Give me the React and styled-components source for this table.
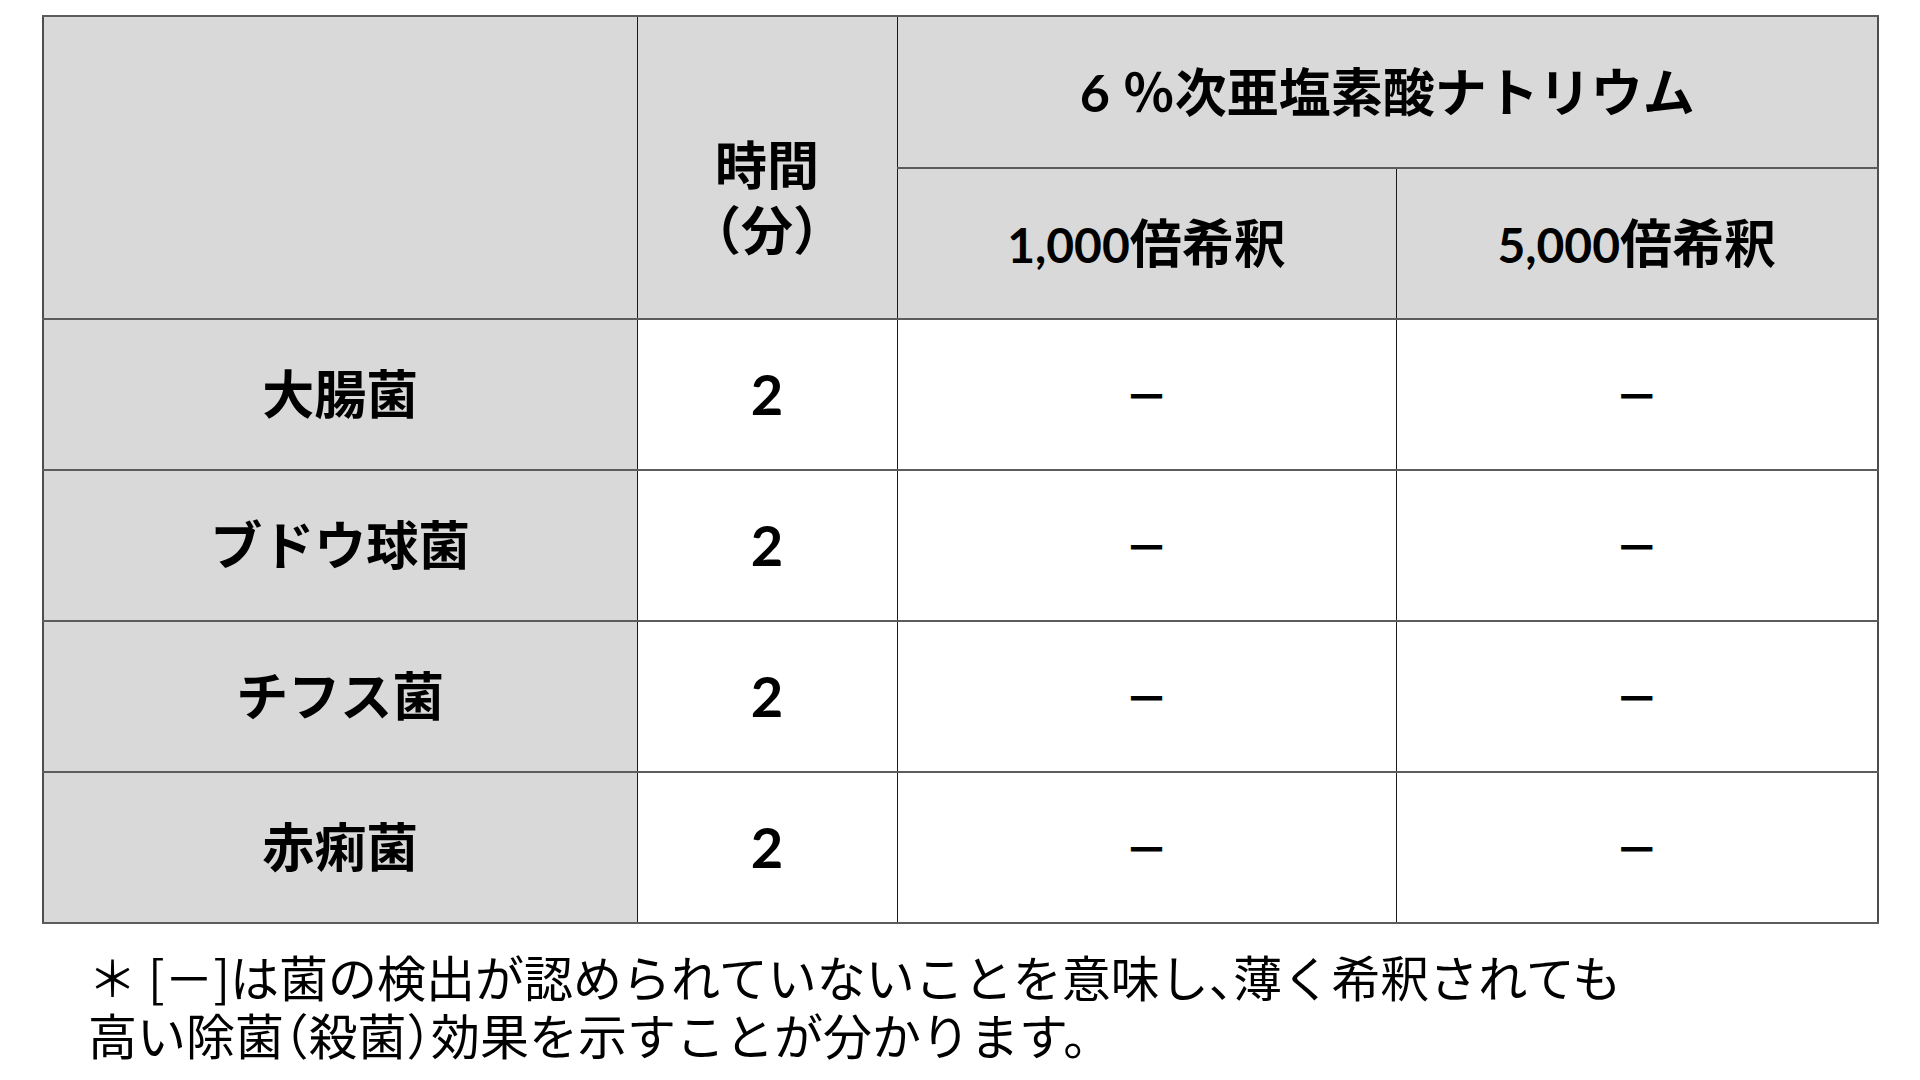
import React from 'react';
import styled, { createGlobalStyle } from 'styled-components';

const GlobalStyle = createGlobalStyle`
  html, body {
    margin: 0;
    background: #fff;
  }
  body {
    font-family: Lato, "Noto Sans CJK JP", sans-serif;
    color: #000;
  }
`;

const Page = styled.main`
  width: 1920px;
  height: 1080px;
  box-sizing: border-box;
  padding: 15px 0 0 42px;
  overflow: hidden;
`;

const Table = styled.table`
  width: 1835px;
  table-layout: fixed;
  border-collapse: collapse;
  border: 2px solid #4d4d4d;
`;

const Row = styled.tr`
  height: ${(p) => p.$h || 151}px;
`;

const Cell = styled.td`
  padding: 0;
  text-align: center;
  vertical-align: middle;
  background: ${(p) => (p.$shade ? '#d9d9d9' : '#fff')};
  border-top: 2px solid #5c5c5c;
  border-bottom: 2px solid #5c5c5c;
  border-left: 1px solid #1a1a1a;
  border-right: 1px solid #1a1a1a;
  font-family: Lato, "Noto Sans CJK JP", sans-serif;
  font-weight: 700;
  font-size: 52px;
  line-height: 65px;
  white-space: nowrap;
`;

const TimeHead = styled(Cell)`
  padding-top: 60px;
  box-sizing: border-box;
`;

const Digits = styled.span`
  font-size: 48px;
`;

const Count = styled.span`
  font-size: 56px;
`;

const Dash = styled.span`
  font-size: 44px;
`;

const Note = styled.p`
  margin: 23px 0 0 46px;
  font-family: "Noto Sans CJK JP", sans-serif;
  font-size: 49px;
  line-height: 58px;
  font-weight: 400;
  white-space: nowrap;
`;

// half-width punctuation, as in the original slide text
const Tight = styled.span`
  font-feature-settings: "halt";
`;

const bacteria = ['大腸菌', 'ブドウ球菌', 'チフス菌', '赤痢菌'];

export default function App() {
  return (
    <>
      <GlobalStyle />
      <Page>
        <Table>
          <colgroup>
            <col style={{ width: 594 }} />
            <col style={{ width: 260 }} />
            <col style={{ width: 499 }} />
            <col style={{ width: 482 }} />
          </colgroup>
          <tbody>
            <Row $h={152}>
              <Cell $shade rowSpan={2} />
              <TimeHead $shade rowSpan={2}>
                時間
                <br />
                （分）
              </TimeHead>
              <Cell $shade colSpan={2}>6 ％次亜塩素酸ナトリウム</Cell>
            </Row>
            <Row $h={151}>
              <Cell $shade>
                <Digits>1,000</Digits>倍希釈
              </Cell>
              <Cell $shade>
                <Digits>5,000</Digits>倍希釈
              </Cell>
            </Row>
            {bacteria.map((name) => (
              <Row key={name}>
                <Cell $shade>{name}</Cell>
                <Cell>
                  <Count>2</Count>
                </Cell>
                <Cell>
                  <Dash>－</Dash>
                </Cell>
                <Cell>
                  <Dash>－</Dash>
                </Cell>
              </Row>
            ))}
          </tbody>
        </Table>
        <Note>
          ＊ [－]は菌の検出が認められていないことを意味し<Tight>、</Tight>薄く希釈されても
          <br />
          高い除菌<Tight>（</Tight>殺菌<Tight>）</Tight>効果を示すことが分かります。
        </Note>
      </Page>
    </>
  );
}
